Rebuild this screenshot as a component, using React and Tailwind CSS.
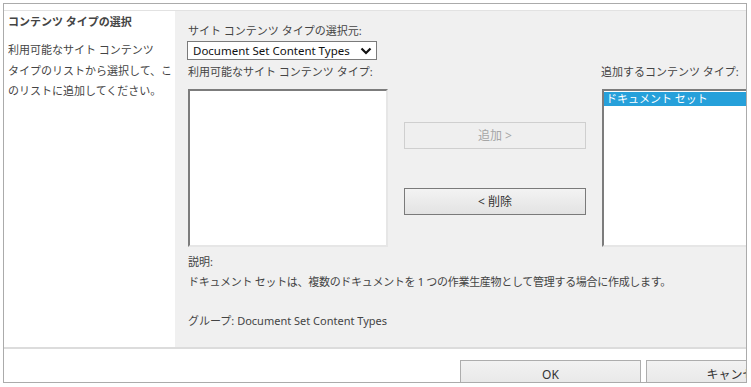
import React from 'react';

const font = { fontFamily: '"Noto Sans", "Noto Sans CJK JP", sans-serif' };

const ListBox = ({ children, className = '' }) => (
  <div
    className={`h-[158px] bg-white border-2 border-t-[#7c7c7c] border-l-[#7c7c7c] border-r-[#e6e6e6] border-b-[#e6e6e6] ${className}`}
  >
    {children}
  </div>
);

const Chevron = () => (
  <svg width="12" height="8" viewBox="0 0 12 8" className="shrink-0">
    <path d="M1.5 1.5 L6 6 L10.5 1.5" fill="none" stroke="#111" strokeWidth="2.2" />
  </svg>
);

export default function App() {
  return (
    <div className="w-[751px] h-[387px] bg-white pt-[3px] pl-[3px] text-[11px] text-[#444]" style={font}>
      <div className="w-[744px] border border-[#ababab] overflow-hidden flex flex-col">
        <div className="h-[7px] border-b border-[#e2e2e2] bg-white" />

        <div className="flex h-[336px]">
          {/* left description column */}
          <div className="w-[171px] shrink-0 bg-white pl-[4px] pt-[3px]">
            <div className="font-bold leading-[16px] text-[#444]">コンテンツ タイプの選択</div>
            <div className="mt-[10px] leading-[20.5px]">
              利用可能なサイト コンテンツ
              <br />
              タイプのリストから選択して、こ
              <br />
              のリストに追加してください。
            </div>
          </div>

          {/* main panel */}
          <div className="flex-1 bg-[#f0f0f0] pl-[12px] pt-[12px] overflow-hidden">
            <div className="leading-[16px] ml-px">サイト コンテンツ タイプの選択元:</div>
            <div className="mt-[2px] w-[190px] h-[19px] bg-white border border-[#7a7a7a] flex items-center justify-between pl-[5px] pr-[4px] text-[#111] text-[11.5px]">
              <span className="leading-none">Document Set Content Types</span>
              <Chevron />
            </div>

            <div className="mt-[4px] flex">
              <div className="w-[201px] shrink-0">
                <div className="leading-[16px] ml-px">利用可能なサイト コンテンツ タイプ:</div>
                <ListBox className="mt-[9px] ml-px" />
              </div>

              <div className="ml-[16px] w-[182px] shrink-0 pt-[58px] flex flex-col gap-[39px]">
                <div className="h-[27px] border border-[#cfcfcf] bg-[#efefef] flex items-center justify-center text-[#a6a6a6] text-[12px]">
                  追加 &gt;
                </div>
                <div className="h-[27px] border border-[#7a7a7a] bg-gradient-to-b from-[#f3f3f3] to-[#e3e3e3] flex items-center justify-center text-[#333] text-[12px]">
                  &lt; 削除
                </div>
              </div>

              <div className="ml-[15px] w-[160px] shrink-0">
                <div className="leading-[16px]">追加するコンテンツ タイプ:</div>
                <ListBox className="mt-[9px] ml-px pt-px">
                  <div className="h-[14px] bg-[#26a0da] text-white leading-[14px] pl-[2px]">ドキュメント セット</div>
                </ListBox>
              </div>
            </div>

            <div className="mt-[5px] leading-[20px] ml-px">説明:</div>
            <div className="leading-[20px] ml-px tracking-[-0.3px]">
              ドキュメント セットは、複数のドキュメントを 1 つの作業生産物として管理する場合に作成します。
            </div>
            <div className="mt-[19px] leading-[20px] ml-px">グループ: Document Set Content Types</div>
          </div>
        </div>

        <div className="h-[2px] bg-[#dcdcdc]" />

        <div className="h-[33px] bg-white pt-[11px] pl-[456px] flex gap-[5px] overflow-hidden">
          <div className="w-[181px] h-[30px] shrink-0 border border-[#adadad] bg-gradient-to-b from-[#f2f2f2] to-[#e6e6e6] flex items-center justify-center text-[#333] text-[12px]">
            OK
          </div>
          <div className="w-[181px] h-[30px] shrink-0 border border-[#adadad] bg-gradient-to-b from-[#f2f2f2] to-[#e6e6e6] flex items-center justify-center text-[#333] text-[12px]">
            キャンセル
          </div>
        </div>
      </div>
    </div>
  );
}
